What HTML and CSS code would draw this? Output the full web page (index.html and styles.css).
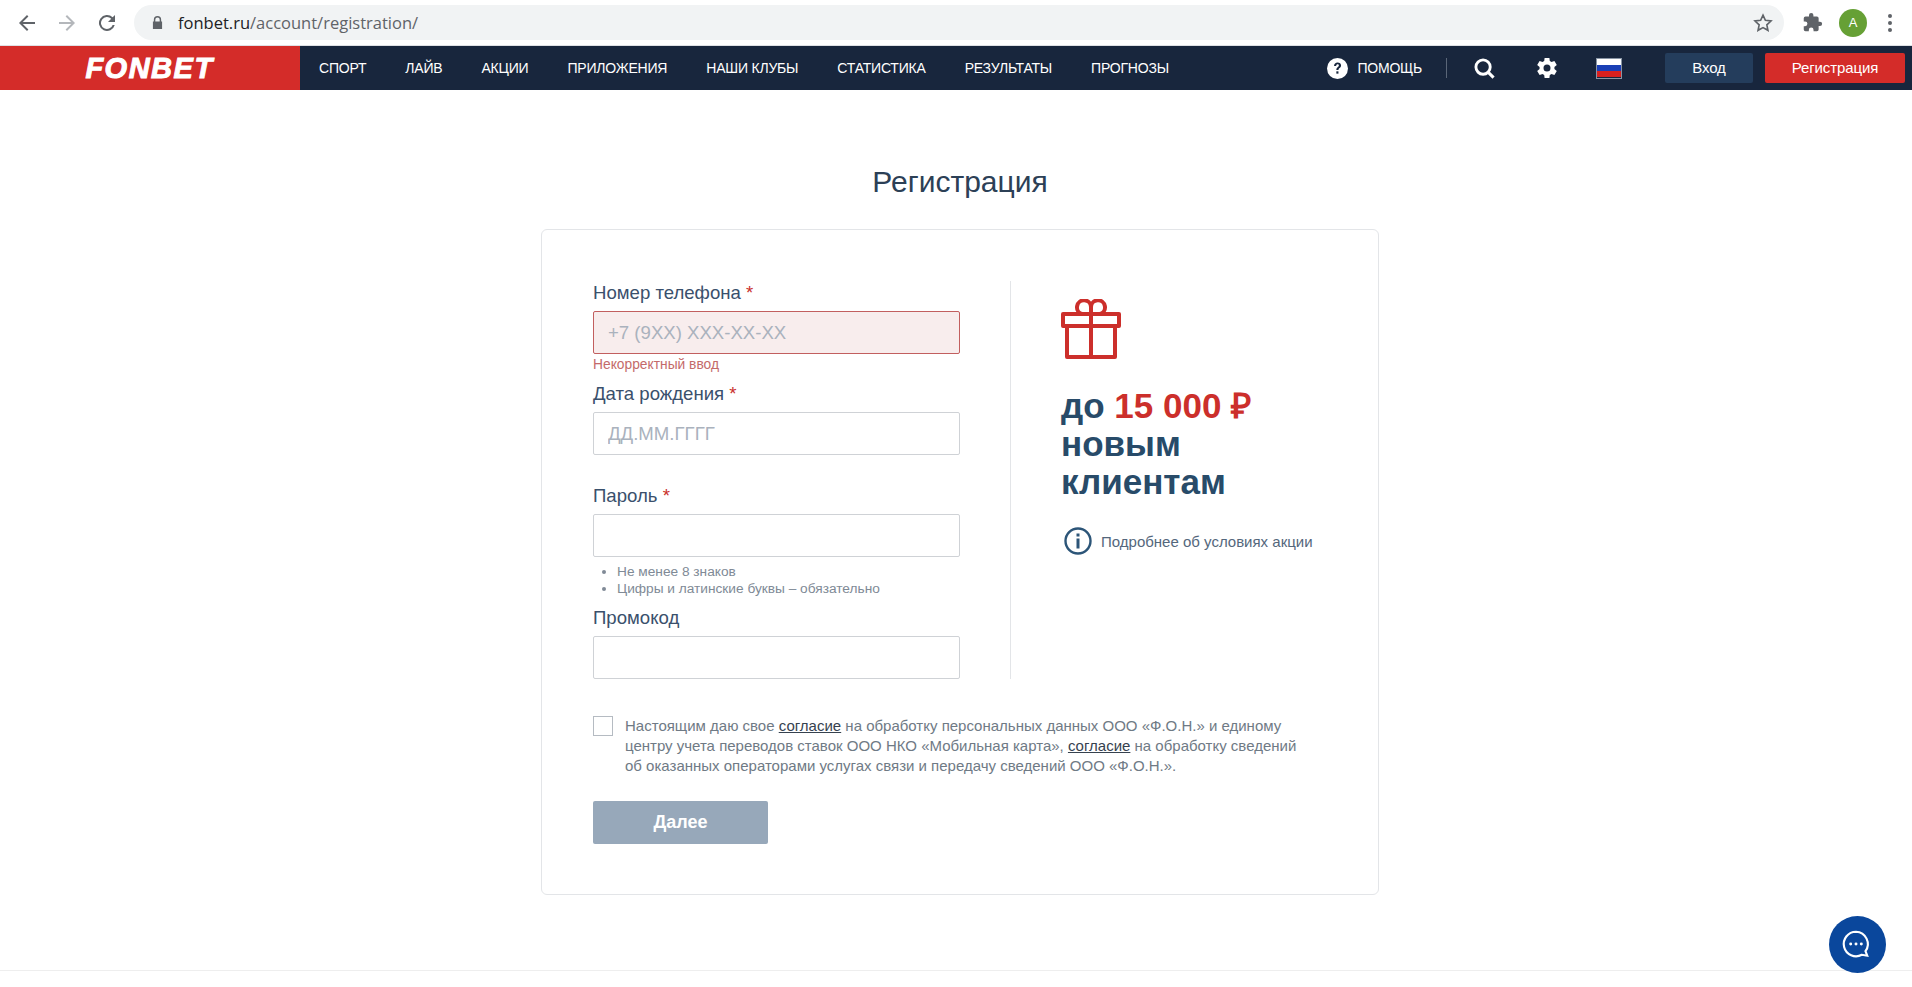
FILE: index.html
```html
<!DOCTYPE html>
<html lang="ru">
<head>
    <meta charset="UTF-8">
    <meta name="viewport" content="width=device-width, initial-scale=1.0">
    <title>Регистрация</title>
    <link rel="stylesheet" href="styles.css">
</head>
<body>

    <!-- browser toolbar -->
    <div class="toolbar">
        <svg class="tool-icon" viewBox="0 0 24 24"><path d="M20 11H7.8l5.6-5.6L12 4l-8 8 8 8 1.4-1.4L7.8 13H20z" fill="#5f6368"/></svg>
        <svg class="tool-icon" viewBox="0 0 24 24"><path d="M4 11h12.2l-5.6-5.6L12 4l8 8-8 8-1.4-1.4 5.6-5.6H4z" fill="#b4b7bb"/></svg>
        <svg class="tool-icon" viewBox="0 0 24 24"><path d="M17.65 6.35A8 8 0 1 0 19.73 14h-2.08a6 6 0 1 1-1.41-6.24L13 11h7V4z" fill="#5f6368"/></svg>
        <div class="address">
            <svg class="lock" viewBox="0 0 12 14"><path d="M2 6V4a4 4 0 0 1 8 0v2h1v8H1V6zm1.6 0h4.8V4a2.4 2.4 0 0 0-4.8 0z" fill="#5f6368"/></svg>
            <span class="host">fonbet.ru</span><span class="url-path">/account/registration/</span>
            <svg class="star" viewBox="0 0 24 24"><path d="M12 3.5l2.6 5.6 6.1.7-4.5 4.2 1.2 6-5.4-3-5.4 3 1.2-6-4.5-4.2 6.1-.7z" fill="none" stroke="#5f6368" stroke-width="1.8"/></svg>
        </div>
        <svg class="puzzle" viewBox="0 0 24 24"><path d="M20.5 11H19V7a2 2 0 0 0-2-2h-4V3.5a2.5 2.5 0 0 0-5 0V5H4a2 2 0 0 0-2 2v3.8h1.5a2.7 2.7 0 0 1 0 5.4H2V20a2 2 0 0 0 2 2h3.8v-1.5a2.7 2.7 0 0 1 5.4 0V22H17a2 2 0 0 0 2-2v-4h1.500a2.500 2.500 0 0 0 0-5z" fill="#5f6368"/></svg>
        <div class="avatar">A</div>
        <div class="dots"><i></i><i></i><i></i></div>
    </div>

    <header class="site-header">
        <a class="logo"><span>FONBET</span></a>
        <nav class="main-nav">
            <a>СПОРТ</a>
            <a>ЛАЙВ</a>
            <a>АКЦИИ</a>
            <a>ПРИЛОЖЕНИЯ</a>
            <a>НАШИ КЛУБЫ</a>
            <a>СТАТИСТИКА</a>
            <a>РЕЗУЛЬТАТЫ</a>
            <a>ПРОГНОЗЫ</a>
        </nav>
        <div class="header-right">
            <a class="help">
                <svg class="help-icon" viewBox="0 0 20 20"><circle cx="10" cy="10" r="10" fill="#fff"/><path d="M6.700 7.500c0-2 1.500-3.200 3.400-3.200s3.300 1.100 3.300 2.800c0 2.300-2.500 2.400-2.500 4.400H8.900c0-3 2.400-3 2.400-4.400 0-.7-.5-1.100-1.200-1.100-.8 0-1.300.5-1.400 1.500z" fill="#18263d"/><rect x="8.900" y="12.700" width="2" height="2.200" fill="#18263d"/></svg>
                ПОМОЩЬ
            </a>
            <span class="sep"></span>
            <svg class="search-icon" viewBox="0 0 22 22"><circle cx="9.500" cy="9.500" r="7.500" fill="none" stroke="#fff" stroke-width="3"/><path d="M15 15l5.500 5.500" stroke="#fff" stroke-width="3.200"/></svg>
            <svg class="gear-icon" viewBox="0 0 24 24"><path d="M19.400 13a7.600 7.600 0 0 0 0-2l2.400-1.900-2.400-4.200-2.900 1.200a7.500 7.500 0 0 0-1.700-1L14.400 2H9.600l-.4 3.100a7.500 7.500 0 0 0-1.700 1L4.600 4.900 2.200 9.100 4.600 11a7.600 7.600 0 0 0 0 2l-2.400 1.900 2.400 4.200 2.900-1.200a7.500 7.500 0 0 0 1.700 1l.4 3.100h4.800l.4-3.100a7.500 7.500 0 0 0 1.700-1l2.900 1.200 2.400-4.200zM12 15.500a3.500 3.500 0 1 1 0-7 3.500 3.500 0 0 1 0 7z" fill="#fff"/></svg>
            <div class="flag"><i class="w"></i><i class="b"></i><i class="r"></i></div>
            <a class="btn-login">Вход</a>
            <a class="btn-register">Регистрация</a>
        </div>
    </header>

    <main class="page">
        <h1>Регистрация</h1>
        <div class="card">
            <div class="columns">
                <form class="form-col">
                    <div class="field">
                        <label>Номер телефона <b>*</b></label>
                        <input class="input input-error" type="text" placeholder="+7 (9XX) XXX-XX-XX">
                        <div class="error-msg">Некорректный ввод</div>
                    </div>
                    <div class="field">
                        <label>Дата рождения <b>*</b></label>
                        <input class="input" type="text" placeholder="ДД.ММ.ГГГГ">
                        <div class="error-msg error-empty"></div>
                    </div>
                    <div class="field">
                        <label>Пароль <b>*</b></label>
                        <input class="input" type="password">
                        <ul class="hints">
                            <li>Не менее 8 знаков</li>
                            <li>Цифры и латинские буквы – обязательно</li>
                        </ul>
                    </div>
                    <div class="field">
                        <label>Промокод</label>
                        <input class="input" type="text">
                    </div>
                </form>
                <aside class="promo">
                    <svg class="gift" viewBox="0 0 60 60">
                        <g fill="none" stroke="#cc2f2b" stroke-width="4" stroke-linejoin="round">
                            <rect x="2" y="15" width="56" height="12"/>
                            <rect x="6" y="27" width="48" height="31"/>
                            <path d="M30 15v43"/>
                            <path d="M30 15h-9a7 7 0 1 1 9-7zM30 15h9a7 7 0 1 0-9-7z"/>
                        </g>
                    </svg>
                    <div class="promo-text">до <em>15 000 ₽</em><br>новым<br>клиентам</div>
                    <a class="promo-info">
                        <svg class="info-icon" viewBox="0 0 28 28"><circle cx="14" cy="14" r="12.500" fill="none" stroke="#2c5578" stroke-width="2.400"/><rect x="12.500" y="11.500" width="3" height="10" fill="#2c5578"/><rect x="12.500" y="6.500" width="3" height="3" fill="#2c5578"/></svg>
                        Подробнее об условиях акции
                    </a>
                </aside>
            </div>
            <div class="consent">
                <span class="checkbox"></span>
                <p>Настоящим даю свое <a>согласие</a> на обработку персональных данных ООО «Ф.О.Н.» и единому центру учета переводов ставок ООО НКО «Мобильная карта», <a>согласие</a> на обработку сведений об оказанных операторами услугах связи и передачу сведений ООО «Ф.О.Н.».</p>
            </div>
            <button class="btn-next" type="button">Далее</button>
        </div>
    </main>

    <div class="footer-line"></div>

    <div class="chat">
        <svg viewBox="0 0 30 30"><path d="M15 3.500a11.500 11.500 0 1 0 5.500 21.600l5 .9-1.600-4.300A11.500 11.500 0 0 0 15 3.500z" fill="none" stroke="#fff" stroke-width="2"/><circle cx="10" cy="15" r="1.400" fill="#fff"/><circle cx="15" cy="15" r="1.400" fill="#fff"/><circle cx="20" cy="15" r="1.400" fill="#fff"/></svg>
    </div>

</body>
</html>
```

FILE: styles.css
```css
* { margin: 0; padding: 0; box-sizing: border-box; }

body {
    font-family: "Liberation Sans", Arial, sans-serif;
    background: white;
    height: 987px;
    overflow: hidden;
}

/* browser toolbar */
.toolbar {
    display: flex;
    align-items: center;
    height: 46px;
    padding-left: 15px;
    background: white;
    border-bottom: 1px solid #dfe1e5;
}

.tool-icon {
    width: 24px; height: 24px;
    margin-right: 16px;
}

.address {
    display: flex;
    align-items: center;
    width: 1650px;
    height: 35px;
    margin-left: -1px;
    padding: 0 10px 0 18px;
    background: #f1f3f4;
    border-radius: 18px;
    font-family: "Open Sans", sans-serif;
    font-size: 16.5px;
}

.lock { width: 11px; height: 13px; margin-right: 15px; }
.host { color: #202124; }
.url-path { color: #5f6368; }
.star { width: 22px; height: 22px; margin-left: auto; }

.puzzle { width: 21px; height: 21px; margin-left: 18px; }

.avatar {
    width: 28px; height: 28px;
    margin-left: 16px;
    border-radius: 50%;
    background: #66a035;
    color: white;
    font-size: 13px;
    line-height: 28px;
    text-align: center;
}

.dots {
    display: flex;
    flex-direction: column;
    gap: 3px;
    margin-left: 21px;
}

.dots i {
    width: 4px; height: 4px;
    border-radius: 50%;
    background: #5f6368;
}

/* site header */
.site-header {
    display: flex;
    align-items: center;
    height: 44px;
    background: #18263d;
    color: white;
}

.logo {
    display: flex;
    align-items: center;
    justify-content: center;
    width: 300px;
    height: 100%;
    padding-right: 1px;
    background: #d42c29;
}

.logo span {
    font-size: 29px;
    font-weight: bold;
    font-style: italic;
    letter-spacing: 1.5px;
    -webkit-text-stroke: 1px white;
}

.main-nav {
    display: flex;
    gap: 39px;
    margin-left: 19px;
    font-size: 14px;
    letter-spacing: -0.2px;
}

.header-right {
    display: flex;
    align-items: center;
    margin-left: auto;
    padding-right: 7px;
    font-size: 14px;
}

.help {
    display: flex;
    align-items: center;
    gap: 9px;
    letter-spacing: -0.2px;
}

.help-icon { width: 21px; height: 21px; }

.sep {
    width: 1px; height: 20px;
    margin: 0 27px 0 24px;
    background: #5a6678;
}

.search-icon { width: 21px; height: 21px; }
.gear-icon { width: 24px; height: 24px; margin-left: 40px; }

.flag {
    display: flex;
    flex-direction: column;
    width: 26px; height: 21px;
    margin-left: 37px;
    border: 1px solid #8894a4;
}

.flag i { flex: 1; }
.flag .w { background: white; }
.flag .b { background: #1a3fb5; }
.flag .r { background: #d8201f; }

.btn-login, .btn-register {
    height: 30px;
    border-radius: 2px;
    font-size: 15px;
    line-height: 30px;
    text-align: center;
    letter-spacing: -0.1px;
}

.btn-login {
    width: 88px;
    margin-left: 43px;
    background: #243d5c;
}

.btn-register {
    width: 140px;
    margin-left: 12px;
    background: #d42c29;
}

/* page */
.page {
    display: flex;
    flex-direction: column;
    align-items: center;
    padding: 74px 0 0 8px;
}

h1 {
    font-size: 30px;
    font-weight: normal;
    line-height: 36px;
    color: #2c4056;
    margin-bottom: 29px;
}

.card {
    width: 838px;
    height: 666px;
    padding: 51px 50px 0 51px;
    border: 1px solid #e3e5e8;
    border-radius: 6px;
}

.columns { display: flex; }

.form-col { width: 367px; }

.field label {
    display: block;
    font-size: 18.6px;
    line-height: 24px;
    color: #3a506c;
    margin-bottom: 6px;
}

.field label b {
    font-weight: normal;
    color: #c9302c;
}

.input {
    display: block;
    width: 100%;
    height: 43px;
    padding: 0 14px;
    border: 1px solid #cfd2d6;
    border-radius: 2px;
    font-family: inherit;
    font-size: 18.6px;
    background: white;
}

.input::placeholder { color: #aab2bd; opacity: 1; }

.input-error {
    background: #f8eded;
    border-color: #c25f5f;
}

.error-msg {
    height: 28px;
    padding-top: 2px;
    font-size: 13.8px;
    line-height: 17px;
    color: #c46a6a;
}

.error-empty { height: 29px; }

.hints {
    height: 49px;
    padding: 6px 0 0 24px;
    font-size: 13.7px;
    line-height: 17px;
    color: #808a96;
}

.promo {
    margin-left: 50px;
    padding-left: 50px;
    border-left: 1px solid #e3e5e8;
    flex: 1;
}

.gift {
    display: block;
    width: 60px; height: 60px;
    margin-top: 18px;
}

.promo-text {
    margin-top: 28px;
    font-size: 35px;
    font-weight: bold;
    line-height: 38px;
    color: #284b69;
}

.promo-text em {
    font-style: normal;
    color: #cc2f2b;
}

.promo-info {
    display: flex;
    align-items: center;
    gap: 9px;
    margin: 26px 0 0 3px;
    font-size: 15px;
    color: #54677c;
}

.info-icon { width: 28px; height: 28px; }

.consent {
    display: flex;
    gap: 12px;
    margin-top: 37px;
}

.checkbox {
    flex: none;
    width: 20px; height: 20px;
    border: 1px solid #b5bbc2;
}

.consent p {
    width: 690px;
    font-size: 15px;
    line-height: 20px;
    color: #6f7a85;
}

.consent a {
    color: #36424f;
    text-decoration: underline;
}

.btn-next {
    display: block;
    width: 175px; height: 43px;
    margin-top: 25px;
    border: none;
    border-radius: 2px;
    background: #97a8ba;
    color: white;
    font-family: inherit;
    font-size: 18px;
    font-weight: bold;
}

.footer-line {
    margin-top: 75px;
    border-top: 1px solid #eeeeee;
}

/* chat button sits over the page */
.chat {
    position: fixed;
    left: 1829px;
    top: 916px;
    display: flex;
    align-items: center;
    justify-content: center;
    width: 57px; height: 57px;
    border-radius: 50%;
    background: #0a479c;
}

.chat svg { width: 32px; height: 32px; margin: 0 3px 2px 0; }
```
